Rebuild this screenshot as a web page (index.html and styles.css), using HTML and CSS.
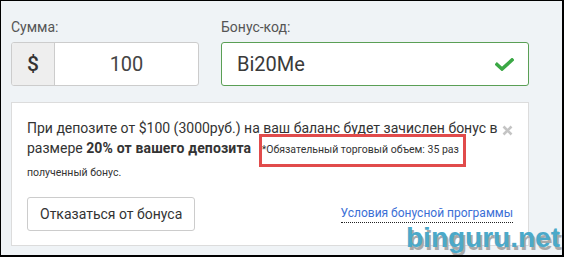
FILE: index.html
```html
<!DOCTYPE html>
<html lang="ru">
<head>
<meta charset="utf-8">
<link rel="stylesheet" href="styles.css">
</head>
<body>
<div class="frame">
  <div class="row">
    <div class="col col-sum">
      <label class="label">Сумма:</label>
      <div class="group">
        <span class="addon">$</span>
        <span class="field field-sum">100</span>
      </div>
    </div>
    <div class="col col-code">
      <label class="label">Бонус-код:</label>
      <div class="group group-ok">
        <span class="field field-code">Bi20Me</span>
        <svg class="check" width="19" height="13" viewBox="0 0 19 13"><path d="M2 6.5 L7 11 L17 2" fill="none" stroke="#3ba845" stroke-width="3.6" stroke-linecap="square"/></svg>
      </div>
    </div>
  </div>
  <div class="panel">
    <svg class="close" width="11" height="11" viewBox="0 0 11 11"><path d="M1.5 1.5 L9.5 9.5 M9.5 1.5 L1.5 9.5" stroke="#c4c4c4" stroke-width="2.6"/></svg>
    <p class="info">При депозите от $100 (3000руб.) на ваш баланс будет зачислен бонус в размере <b>20% от вашего депозита</b> <span class="note"><span class="mark">*Обязательный торговый объем: 35 раз</span><br>полученный бонус.</span></p>
    <div class="actions">
      <button class="btn">Отказаться от бонуса</button>
      <a class="terms" href="#">Условия бонусной программы</a>
    </div>
  </div>
  <div class="wm">binguru.net</div>
</div>
</body>
</html>
```
FILE: styles.css
```css
html, body {
  margin: 0;
  padding: 0;
}
body {
  font-family: Roboto, "Liberation Sans", sans-serif;
  color: #333;
}
.frame {
  position: relative;
  width: 564px;
  height: 257px;
  box-sizing: border-box;
  border-style: solid;
  border-color: #000;
  border-width: 1px 2px 2px 1px;
  background: #eff3f6;
  padding: 18px 0 0 10px;
  overflow: hidden;
}
.row {
  display: flex;
  gap: 22px;
}
.col-sum { width: 188px; }
.col-code { width: 308px; }
.label {
  display: block;
  font-size: 14px;
  line-height: 16px;
  color: #555;
  margin-bottom: 7px;
}
.group {
  display: flex;
  align-items: center;
  height: 44px;
  box-sizing: border-box;
  border: 1px solid #ccc;
  border-radius: 3px;
  background: #fff;
  overflow: hidden;
}
.addon {
  width: 42px;
  height: 100%;
  display: flex;
  align-items: center;
  justify-content: center;
  background: #eeeeee;
  border-right: 1px solid #ccc;
  font-size: 21px;
  font-weight: 500;
  color: #333;
}
.field {
  font-size: 20px;
  color: #444;
}
.field-sum {
  flex: 1;
  text-align: center;
}
.group-ok {
  border-color: #5a9f55;
  justify-content: space-between;
  padding: 0 14px 0 15px;
}
.field-code { color: #3a3a3a; }
.check { display: block; }
.panel {
  position: relative;
  width: 518px;
  box-sizing: border-box;
  margin-top: 16px;
  background: #fff;
  border: 1px solid #dcdcdc;
  padding: 15px 15px 14px 15px;
}
.close {
  position: absolute;
  top: 22px;
  right: 15px;
}
.info {
  margin: 0;
  font-size: 14px;
  line-height: 20px;
  color: #333;
}
.info b {
  font-weight: 700;
  letter-spacing: 0.15px;
}
.note {
  font-size: 10.5px;
  line-height: 22px;
  margin-left: 7px;
}
.mark {
  position: relative;
  white-space: nowrap;
}
.mark::after {
  content: "";
  position: absolute;
  left: -3px;
  right: -7px;
  top: -9px;
  bottom: -11px;
  border: 3px solid #e14b4b;
}
.actions {
  display: flex;
  justify-content: space-between;
  align-items: center;
  margin-top: 13px;
}
.btn {
  height: 34px;
  padding: 0 12px;
  font-family: Roboto, "Liberation Sans", sans-serif;
  font-size: 14px;
  color: #333;
  background: #fff;
  border: 1px solid #ccc;
  border-radius: 3px;
}
.terms {
  font-size: 12px;
  color: #3b6fd6;
  text-decoration: none;
  border-bottom: 1px dotted #222;
  padding-bottom: 2px;
}
.wm {
  position: absolute;
  right: 2px;
  bottom: 2px;
  font-family: "Liberation Sans", Arial, sans-serif;
  font-weight: 700;
  font-size: 28px;
  line-height: 30px;
  color: #4ba9c9;
  text-shadow: 2px 3px 0 #a9a9a9;
}
```
